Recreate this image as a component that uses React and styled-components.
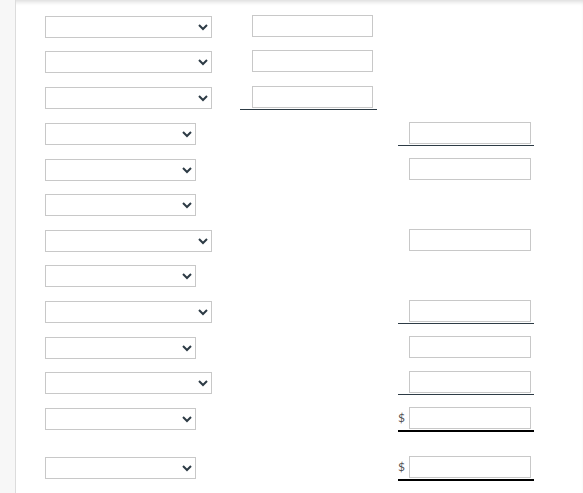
import React from "react";
import styled, { createGlobalStyle } from "styled-components";

const Global = createGlobalStyle`
  html, body { margin: 0; padding: 0; background: #fff; }
  body { font-family: Lato, "Noto Sans", sans-serif; color: #2d3b45; }
`;

const Page = styled.div`
  display: flex;
  min-height: 493px;
  box-shadow: inset 0 4px 4px -2px rgba(0, 0, 0, 0.14);
`;

const Sidebar = styled.div`
  width: 15px;
  flex: none;
  background: #f7f7f7;
  border-right: 1px solid #dcdcdc;
`;

const Main = styled.div`
  flex: 1;
  padding: 15px 0 0 29px;
  display: flex;
  flex-direction: column;
`;

const Row = styled.div`
  display: grid;
  grid-template-columns: 195px 137px 21px 136px;
  align-items: start;
  height: ${(p) => p.$h}px;
`;

const Select = styled.select`
  width: ${(p) => (p.$wide ? 167 : 151)}px;
  height: 22px;
  box-sizing: border-box;
  border: 1px solid #c8c8c8;
  border-radius: 0;
  background: #fff;
  font-family: Lato, sans-serif;
  font-size: 12px;
  padding: 0 4px;
  margin: 0;
  color: #2d3b45;
`;

const Cell = styled.div`
  display: flex;
  align-items: center;
  box-sizing: border-box;
  padding-left: ${(p) => p.$pad}px;
  padding-bottom: ${(p) => (p.$line ? 1 : 0)}px;
  border-bottom: ${(p) =>
    p.$line === "total"
      ? "2px solid #000"
      : p.$line
      ? "1px solid #2d3b45"
      : "none"};
`;

const Input = styled.input`
  width: ${(p) => p.$w}px;
  height: 22px;
  box-sizing: border-box;
  border: 1px solid #c8c8c8;
  border-radius: 0;
  margin: 0;
  padding: 0 4px;
  background: #fff;
  font-family: Lato, sans-serif;
  font-size: 12px;
`;

const Currency = styled.span`
  width: 11px;
  flex: none;
  font-size: 12px;
  color: #555;
  line-height: 22px;
`;

const rows = [
  { h: 35, wide: true, mid: "plain" },
  { h: 36, wide: true, mid: "plain" },
  { h: 36, wide: true, mid: "line" },
  { h: 36, right: "line" },
  { h: 35, right: "plain" },
  { h: 36 },
  { h: 35, wide: true, right: "plain" },
  { h: 36 },
  { h: 36, wide: true, right: "line" },
  { h: 35, right: "plain" },
  { h: 36, wide: true, right: "line" },
  { h: 49, right: "total", dollar: true },
  { h: 37, right: "total", dollar: true },
];

export default function App() {
  return (
    <>
      <Global />
      <Page>
        <Sidebar />
        <Main>
          {rows.map((r, i) => (
            <Row key={i} $h={r.h}>
              <div>
                <Select $wide={r.wide} aria-label={`Account ${i + 1}`}>
                  <option value=""></option>
                </Select>
              </div>
              {r.mid ? (
                <Cell $pad={12} $line={r.mid === "line"}>
                  <Input $w={121} />
                </Cell>
              ) : (
                <div />
              )}
              <div />
              {r.right ? (
                <Cell
                  $pad={0}
                  $line={r.right === "total" ? "total" : r.right === "line"}
                >
                  <Currency>{r.dollar ? "$" : ""}</Currency>
                  <Input $w={122} />
                </Cell>
              ) : (
                <div />
              )}
            </Row>
          ))}
        </Main>
      </Page>
    </>
  );
}
